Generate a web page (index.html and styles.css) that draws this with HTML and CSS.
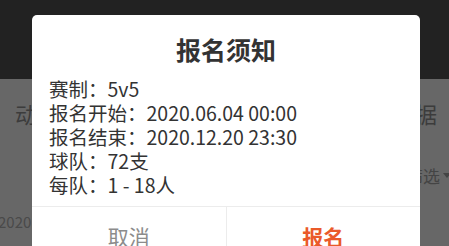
FILE: index.html
```html
<!DOCTYPE html>
<html lang="zh-CN">
<head>
  <meta charset="UTF-8">
  <meta name="viewport" content="width=device-width, initial-scale=1.0">
  <title>报名须知</title>
  <link rel="stylesheet" href="styles.css">
</head>
<body>
  <div class="page">
    <header class="top-bar"></header>
    <div class="tabs">
      <span>动态</span>
      <span>赛程</span>
      <span>球队</span>
      <span>数据</span>
    </div>
    <div class="filter-row">
      <span>筛选</span>
      <span class="arrow"></span>
    </div>
    <div class="list-row">2020.06.04</div>
  </div>

  <div class="dialog">
    <h2 class="dialog-title">报名须知</h2>
    <div class="dialog-body">
      <p>赛制：5v5</p>
      <p>报名开始：2020.06.04 00:00</p>
      <p>报名结束：2020.12.20 23:30</p>
      <p>球队：72支</p>
      <p>每队：1 - 18人</p>
    </div>
    <div class="dialog-actions">
      <button class="btn-cancel">取消</button>
      <button class="btn-ok">报名</button>
    </div>
  </div>
</body>
</html>
```

FILE: styles.css
```css
/* page under the mask */
body {
  margin: 0;
  padding: 0;
  width: 449px;
  height: 246px;
  overflow: hidden;
  background-color: #676767;
  font-family: "Noto Sans CJK SC", "Noto Sans", sans-serif;
}
.top-bar {
  background-color: #222;
  height: 79px;
}
.tabs {
  display: flex;
  justify-content: space-between;
  padding: 0 12px 0 15px;
  height: 68px;
  line-height: 68px;
  font-size: 22px;
  color: #3c3c3c;
}
.filter-row {
  display: flex;
  justify-content: flex-end;
  align-items: center;
  gap: 3px;
  margin-right: -2px;
  height: 56px;
  font-size: 17px;
  color: #444;
}
.arrow {
  width: 0;
  height: 0;
  border-left: 4px solid transparent;
  border-right: 4px solid transparent;
  border-top: 5px solid #444;
}
.list-row {
  margin-top: 9px;
  margin-left: -2px;
  font-size: 15px;
  line-height: 20px;
  color: #4a4a4a;
}

/* dialog */
.dialog {
  position: absolute;
  top: 15px;
  left: 32px;
  width: 388px;
  height: 260px;
  overflow: hidden;
  background-color: #fff;
  border-radius: 5px;
  color: #333;
}
.dialog-title {
  margin: 0;
  padding-top: 19px;
  font-size: 25px;
  line-height: 30px;
  font-weight: bold;
  text-align: center;
}
.dialog-body {
  margin-top: 13px;
  padding: 0 17px 9px;
  font-size: 19.5px;
  line-height: 24px;
}
.dialog-body p {
  margin: 0;
}
.dialog-actions {
  display: flex;
  border-top: 1px solid #ececec;
}
.dialog-actions button {
  flex: 1;
  height: 58px;
  padding: 0;
  border: none;
  background: #fff;
  font-family: inherit;
  font-size: 21px;
}
.btn-cancel {
  color: #8c8c8c;
  border-right: 1px solid #ececec !important;
}
.btn-ok {
  color: #ea5a2a;
  font-weight: bold;
}
```
